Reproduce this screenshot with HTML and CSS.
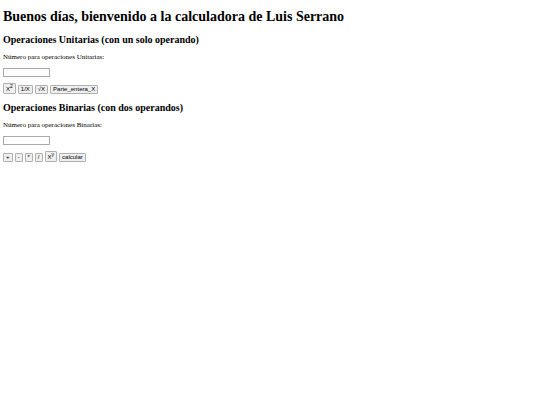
FILE: index.html
```html
<!DOCTYPE html>
<html lang="es">
<head>
	<meta charset="utf-8">
	<title>Calculadora</title>
	<link rel="stylesheet" href="styles.css">
</head>
<body>
	<h1>Buenos días, bienvenido a la calculadora de Luis Serrano</h1>

	<h2>Operaciones Unitarias (con un solo operando)</h2>
	<form class="operacion">
		<label for="unitaria">Número para operaciones Unitarias:</label>
		<input type="text" id="unitaria">
		<div class="botones">
			<button type="button">X<sup>2</sup></button>
			<button type="button">1/X</button>
			<button type="button">√X</button>
			<button type="button">Parte_entera_X</button>
		</div>
	</form>

	<h2>Operaciones Binarias (con dos operandos)</h2>
	<form class="operacion">
		<label for="binaria">Número para operaciones Binarias:</label>
		<input type="text" id="binaria">
		<div class="botones">
			<button type="button">+</button>
			<button type="button">-</button>
			<button type="button">*</button>
			<button type="button">/</button>
			<button type="button">X<sup>y</sup></button>
			<button type="button">calcular</button>
		</div>
	</form>
</body>
</html>
```
FILE: styles.css
```css
body {
	margin: 9px 3px;
	font-family: "Liberation Serif", serif;
	font-size: 7px;
	line-height: 8px;
	color: #000;
	background-color: #fff;
}
h1 {
	margin: 0 0 9px;
	font-size: 14px;
	line-height: 16px;
}
h2 {
	margin: 0 0 7px;
	font-size: 10px;
	line-height: 12px;
}
.operacion {
	display: flex;
	flex-direction: column;
	align-items: flex-start;
	gap: 6px;
	margin-bottom: 8px;
}
input {
	box-sizing: border-box;
	width: 47px;
	height: 9px;
	margin: 1px 0 0;
	padding: 0 1px;
	border: 1px solid #aaa;
	font-family: "Liberation Sans", sans-serif;
	font-size: 6px;
}
.botones {
	display: flex;
	align-items: flex-end;
	gap: 2px;
}
button {
	margin: 0;
	padding: 0 2px;
	border: 1px solid #b0b0b0;
	border-radius: 1px;
	background-color: #efefef;
	font-family: "Liberation Sans", sans-serif;
	font-size: 6px;
	line-height: 7px;
	color: #000;
}
sup {
	font-size: 5px;
	line-height: 4px;
}
```
